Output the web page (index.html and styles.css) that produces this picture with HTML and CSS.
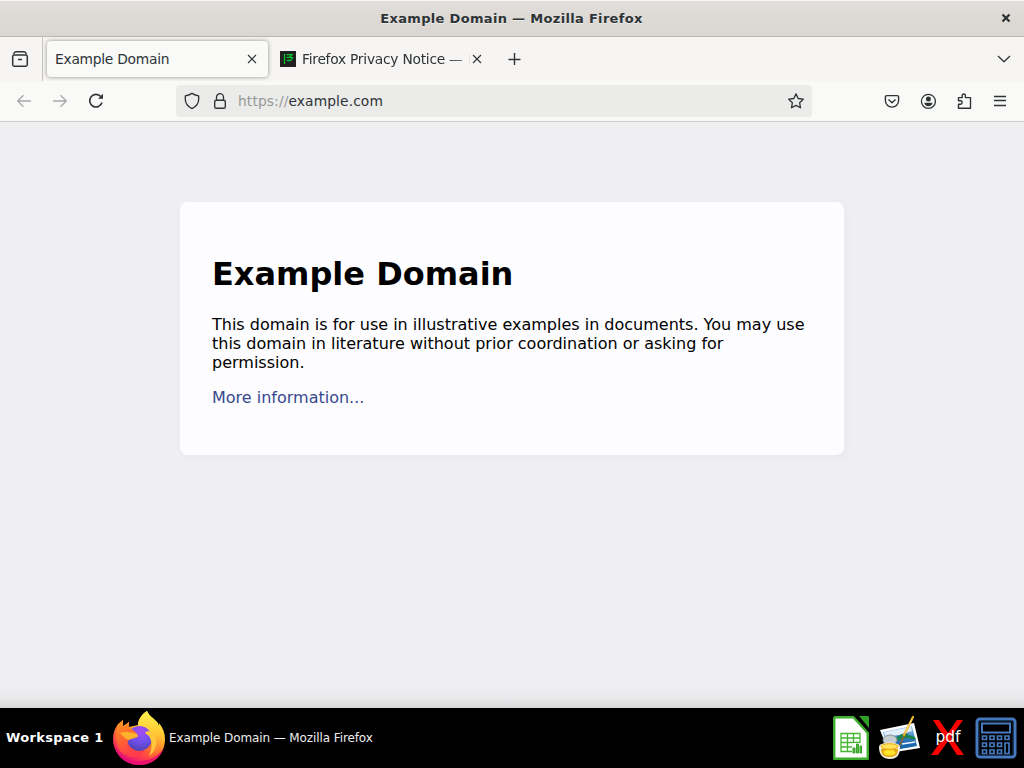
FILE: index.html
```html
<!DOCTYPE html>
<html lang="en">
<head>
<meta charset="utf-8">
<title>Example Domain</title>
<link rel="stylesheet" href="styles.css">
</head>
<body>
<header class="titlebar">
  <span class="window-title">Example Domain — Mozilla Firefox</span>
  <svg class="window-close" width="10" height="10" viewBox="0 0 10 10"><path d="M1.500 1.500l7 7M8.500 1.500l-7 7" stroke="#2e3436" stroke-width="2.300"/></svg>
</header>
<nav class="tabs">
  <div class="tab-history"><svg class="icon" width="18" height="18" viewBox="0 0 18 18"><path d="M2.500 4.200C3 2.500 3.500 1.700 5 1.700h8c1.500 0 2 .8 2.500 2.500" stroke-width="1.400"/><rect x="1.700" y="4.900" width="14.600" height="11.400" rx="1.700" stroke-width="1.500"/><path d="M7 9.500h4" stroke-width="1.500"/></svg></div>
  <div class="tab tab-active"><span class="tab-label">Example Domain</span><svg class="icon tab-close" width="10" height="10" viewBox="0 0 10 10"><path d="M1 1l8 8M9 1L1 9" stroke-width="1.100"/></svg></div>
  <div class="tab tab-second"><svg class="favicon" width="16" height="16" viewBox="0 0 16 16"><path fill="#232022" d="M0 0h16v16H0z"/><path d="M4.500 3v10M6.500 3.600H12L9.800 6.200l2.600.6-1.700 2.700H7M6.500 6.300h3" fill="none" stroke="#00c52c" stroke-width="1.300"/></svg><span class="tab-label tab-faded">Firefox Privacy Notice —</span><svg class="icon tab-close" width="10" height="10" viewBox="0 0 10 10"><path d="M1 1l8 8M9 1L1 9" stroke-width="1.100"/></svg></div>
  <svg class="icon new-tab" width="14" height="14" viewBox="0 0 14 14"><path d="M6.500 1v12M.5 7.500h12" stroke-width="1.400"/></svg>
  <svg class="icon all-tabs" width="14" height="8" viewBox="0 0 14 8"><path d="M1 1l6 5.700L13 1" stroke-width="1.300"/></svg>
</nav>
<div class="toolbar">
  <div class="navigation">
    <svg class="icon disabled" width="16" height="16" viewBox="0 0 16 16"><path d="M15 8H1.800M7.500 2.200L1.700 8l5.800 5.800" stroke-width="1.300"/></svg>
    <svg class="icon disabled" width="16" height="16" viewBox="0 0 16 16"><path d="M1 8h13.200M8.500 2.200L14.300 8l-5.800 5.800" stroke-width="1.300"/></svg>
    <svg class="icon" width="16" height="16" viewBox="0 0 16 16"><path d="M14 9.500A6.300 6.300 0 1 1 12.800 3.600" stroke-width="1.600"/><path d="M15 .8v5H10z" fill="#2e3436" stroke="none"/></svg>
  </div>
  <div class="urlbar">
    <svg class="icon" width="16" height="18" viewBox="0 0 16 18"><path d="M8 1.400C5.800 2.700 3.700 3.500 1.300 3.900v3.400c0 4.300 2.700 7.500 6.700 9.300 4-1.800 6.700-5 6.700-9.300V3.900C12.300 3.500 10.200 2.700 8 1.400z"/></svg>
    <svg class="icon" width="14" height="18" viewBox="0 0 14 18"><path d="M3.500 8V5.200a3.500 3.500 0 0 1 7 0V8"/><rect x="1.700" y="8.200" width="10.600" height="8.100" rx="1.600" stroke-width="1.400"/></svg>
    <span class="url"><span class="scheme">https://</span>example.com</span>
    <svg class="icon star" width="16" height="16" viewBox="0 0 16 16"><path d="M8 .9l2.200 4.600 5.100.7-3.700 3.500.9 5.100L8 12.400l-4.500 2.400.9-5.100L.7 6.200l5.100-.7z"/></svg>
  </div>
  <div class="actions">
    <svg class="icon" width="16" height="16" viewBox="0 0 16 16"><path d="M2.800 2.600h10.400c.8 0 1.400.6 1.400 1.400v3.500a6.600 6.600 0 0 1-13.200 0V4c0-.8.600-1.400 1.400-1.400zM4.500 6.400L8 9.700l3.500-3.300" stroke-width="1.400"/></svg>
    <svg class="icon" width="16" height="16" viewBox="0 0 16 16"><circle cx="8.400" cy="8.300" r="7"/><circle cx="8.400" cy="6" r="2.500" class="solid"/><path class="solid" d="M4.400 9.800h8c0 2-1.800 3.400-4 3.400s-4-1.400-4-3.400z"/></svg>
    <svg class="icon" width="16" height="16" viewBox="0 0 16 16"><path d="M2.500 15.300v-4h2c2.200 0 2.200-3.500 0-3.500h-2V4.600h3.700V2.500c0-2 3.200-2 3.200 0v2.100h5.100v10.700z" stroke-width="1.400"/></svg>
    <svg class="icon" width="16" height="16" viewBox="0 0 16 16"><path d="M2 3.500h12M2 7.500h12M2 12.500h12" stroke-width="1.300"/></svg>
  </div>
</div>
<main class="page">
  <section class="card">
    <h1>Example Domain</h1>
    <p>This domain is for use in illustrative examples in documents. You may use this domain in literature without prior coordination or asking for permission.</p>
    <p><a href="#">More information...</a></p>
  </section>
</main>
<footer class="taskbar">
  <span class="workspace">Workspace 1</span>
  <svg class="firefox" width="54" height="56" viewBox="0 0 54 56">
    <defs>
      <linearGradient id="flame" x1=".8" y1=".05" x2=".3" y2=".95"><stop offset="0" stop-color="#fff44f"/><stop offset=".32" stop-color="#ffc02e"/><stop offset=".55" stop-color="#ff7a29"/><stop offset=".8" stop-color="#ff3b4b"/><stop offset="1" stop-color="#e3127e"/></linearGradient>
      <linearGradient id="tail" x1=".5" y1="0" x2=".5" y2="1"><stop offset="0" stop-color="#fff44f"/><stop offset=".5" stop-color="#ffc633"/><stop offset="1" stop-color="#ff682f"/></linearGradient>
      <linearGradient id="fur" x1="0" y1="0" x2=".3" y2="1"><stop offset="0" stop-color="#ff9e22"/><stop offset=".4" stop-color="#ff7428"/><stop offset="1" stop-color="#ff3c4a"/></linearGradient>
      <radialGradient id="globe" cx=".55" cy=".2" r=".85"><stop offset="0" stop-color="#a84af5"/><stop offset=".5" stop-color="#7351ef"/><stop offset="1" stop-color="#4b40a9"/></radialGradient>
    </defs>
    <path fill="url(#flame)" d="M35 1c2 5 7 7 11 12l1 3v-3c4 5 6 10 6 16 0 15-11 26-26 26S1 43 1 29c0-6 2-11 5-15l5-4v6l6-4v5l9-2c0-6 4-11 9-14z"/>
    <path fill="#e60a72" opacity=".8" d="M2 34c4 11 13 17 25 17 11 0 20-5 25-14-3 11-12 18-25 18S4 46 2 34z"/>
    <path fill="url(#tail)" d="M35 1c2 6 9 9 12 16 6 13 1 27-11 30 6-5 8-15 3-22-5-4-9-4-13-9 0-6 4-12 9-15z"/>
    <circle cx="27.500" cy="28.500" r="12.500" fill="url(#globe)"/>
    <path fill="url(#fur)" d="M11 10v7l6-5v6c3 1 6 3 8 6 1 2 1 3-3 4-5 1-7 3-7 7 1 8 12 9 18 4-4 10-20 11-26 0C2 28 3 17 11 10z"/>
    <path fill="#ffb22b" d="M8 23c5-2 12-1 17 1l1 2c-1 2-6 2-9 4-4-1-6-4-9-7z"/>
    <path fill="#ffc83c" d="M35 21l5 1c7 7 5 18-3 24 3-7 4-13 0-20l-4-3z"/>
  </svg>
  <span class="task-title">Example Domain — Mozilla Firefox</span>
  <div class="launchers">
    <svg width="36" height="44" viewBox="0 0 36 44"><path fill="#fff" stroke="#3dae2b" stroke-width="2.400" stroke-linejoin="round" d="M2 1.200h18.500L34.800 17v25.800H1.200V2z"/><path fill="#2f9e24" d="M26 0h9l1 1v11z"/><path fill="none" stroke="#43b52f" stroke-width="1.300" d="M8 17.500h19v18H8zM8 22h19M8 26.500h19M8 31h19M14.500 17.500v18M20.500 17.500v18"/><path fill="#fff" d="M19 27h10v11H19z"/><path fill="#52bd40" stroke="#35a127" d="M20 32h2v5h-2zM23.500 28h2v9h-2zM27 30h1.500v7H27z"/></svg>
    <svg width="42" height="46" viewBox="0 0 42 46">
      <defs><linearGradient id="sea" x1="0" y1="0" x2="0" y2="1"><stop offset="0" stop-color="#a8cdf2"/><stop offset=".5" stop-color="#3177bd"/><stop offset="1" stop-color="#075aa0"/></linearGradient></defs>
      <path fill="#fff" d="M1 15l34-7 6 25-31 5z"/><path fill="url(#sea)" d="M4 17l29-6 5 20-28 5z"/><path fill="#e3effa" d="M5 17l27-5 1 4-13 4-14 2z"/><path fill="#19834e" d="M15 24c8-6 13-7 14-4l7 2 1 3-9-2-12 3z"/><path stroke="#eef7ff" stroke-width="1.500" d="M23 29l13-2"/>
      <path stroke="#8c6429" stroke-width="1.600" d="M20 32l6-13"/><path stroke="#edb126" stroke-width="2.200" stroke-linecap="round" d="M25 20L34 2"/><path stroke="#ffeaa0" stroke-width=".8" d="M26 18l7-14"/>
      <ellipse cx="11" cy="25" rx="7" ry="5" fill="#c3cdd0" stroke="#879499"/><path fill="#f4f0df" d="M0 32c0-6 21-6 21 0 0 8-3 12-10 12S0 40 0 32z"/><path fill="#e5a713" d="M2 34h17c0 6-3 8-8.500 8S2 40 2 34z"/><ellipse cx="10.500" cy="37.500" rx="6" ry="3" fill="#ffe42b"/><ellipse cx="10.500" cy="31.500" rx="8.500" ry="2.800" fill="#ffe45a" stroke="#e7a60c"/>
    </svg>
    <svg width="34" height="36" viewBox="0 0 34 36"><path fill="#f00" d="M2 0h6l9 13L26 0h6L20 17l13 18h-7l-9-14L7 35H0l13-18z"/><text class="pdf" x="17" y="22" text-anchor="middle">pdf</text></svg>
    <svg width="42" height="42" viewBox="0 0 42 42" fill="none" stroke="#4679bd"><rect x="2" y="2" width="38" height="38" rx="3" stroke-width="3"/><rect x="4" y="4" width="34" height="34" stroke="#183457"/><rect x="7" y="6.500" width="28" height="9" stroke-width="2"/><path stroke-width="1.700" d="M7.500 19h4v3.500h-4zM15 19h4v3.500h-4zM22.500 19h4v3.500h-4zM30 19h4v3.500h-4zM7.500 26h4v3.500h-4zM15 26h4v3.500h-4zM22.500 26h4v3.500h-4zM30 26h4v10.500h-4zM7.500 33h4v3.500h-4zM15 33h4v3.500h-4zM22.500 33h4v3.500h-4z"/></svg>
  </div>
</footer>
</body>
</html>
```
FILE: styles.css
```css
* { box-sizing: border-box; }
html, body { margin: 0; height: 100%; overflow: hidden; }
body { display: flex; flex-direction: column; font-family: "DejaVu Sans", sans-serif; color: #2e3436; }
svg { display: block; flex: none; }
.icon { fill: none; stroke: #2e3436; stroke-width: 1.3; stroke-linejoin: round; }
.disabled { opacity: .4; }
.solid { fill: #2e3436; stroke: none; }
.titlebar { height: 37px; flex: none; display: grid; grid-template-columns: 1fr auto 1fr; align-items: center; padding: 0 13px 0 12px; background: linear-gradient(#e1dedb, #d9d5d0); border-top: 1px solid #f8f7f7; border-bottom: 1px solid #c0b5aa; }
.window-title { grid-column: 2; font-size: 13px; letter-spacing: .32px; font-weight: bold; white-space: nowrap; text-shadow: 0 1px #eeeceb; }
.window-close { grid-column: 3; justify-self: end; margin-top: -1px; }
.tabs { height: 44px; flex: none; display: flex; align-items: center; background: #f6f5f4; font-size: 13.8px; letter-spacing: -.25px; }
.tab-history { width: 43px; height: 44px; padding: 13px 0 0 11px; border-right: 1px solid #c6c4c2; }
.tab { height: 36px; flex: none; display: flex; align-items: center; }
.tab-active { width: 221px; margin-left: 4px; padding: 0 11px 0 8px; border-radius: 4px; background: #f9f9f8; box-shadow: 0 0 4px rgba(0,0,0,.42); }
.tab-label { white-space: nowrap; }
.tab-close { margin-left: auto; }
.tab-second { width: 214px; padding-left: 12px; }
.tab-faded { margin-left: 6px; line-height: 20px; -webkit-mask-image: linear-gradient(90deg, #000 85%, rgba(0,0,0,.5)); mask-image: linear-gradient(90deg, #000 85%, rgba(0,0,0,.5)); }
.tab-faded::after { content: ""; display: inline-block; width: 1px; height: 10px; margin-left: 6px; background: #d4d4d3; }
.new-tab { margin-left: 26px; }
.all-tabs { margin-left: auto; margin-right: 13px; }
.toolbar { height: 41px; flex: none; display: flex; align-items: center; background: #f9f9f8; border-bottom: 1px solid #cccccb; }
.navigation { width: 176px; display: flex; gap: 20px; padding-left: 16px; }
.urlbar { width: 636px; height: 32px; display: flex; align-items: center; gap: 13px; padding: 0 8px; background: #ebebea; border-radius: 4px; }
.url { font-size: 13.8px; letter-spacing: .12px; margin-left: -2px; }
.scheme { color: #979998; }
.star { margin-left: auto; }
.actions { display: flex; gap: 20px; margin-left: 72px; }
.page { flex: 1; padding-top: 80px; background: linear-gradient(#efeff1 0, #efeff1 565px, #eaeaec 576px, #d8d8d9 100%); color: #000; }
.card { width: 664px; height: 253px; margin: 0 auto; padding: 32px; border-radius: 8px; background: #fdfdff; box-shadow: 2px 3px 7px 2px rgba(0,0,0,.02); }
h1 { margin: 21px 0 22px; font-size: 32px; line-height: 38px; }
p { margin: 16px 0; font-size: 16px; line-height: 19px; }
a { color: #38488f; text-decoration: none; }
.taskbar { height: 60px; flex: none; display: flex; align-items: center; padding: 0 7px 0 6px; background: #000; color: #fff; font-size: 12px; white-space: nowrap; }
.workspace { width: 106px; margin-top: -1px; font-weight: bold; font-size: 13px; letter-spacing: .35px; }
.task-title { margin-left: 3px; color: #eee; letter-spacing: -.1px; }
.launchers { display: flex; align-items: center; gap: 10px; margin-left: auto; }
.pdf { font-size: 15.5px; fill: #fff; stroke: none; }
```
